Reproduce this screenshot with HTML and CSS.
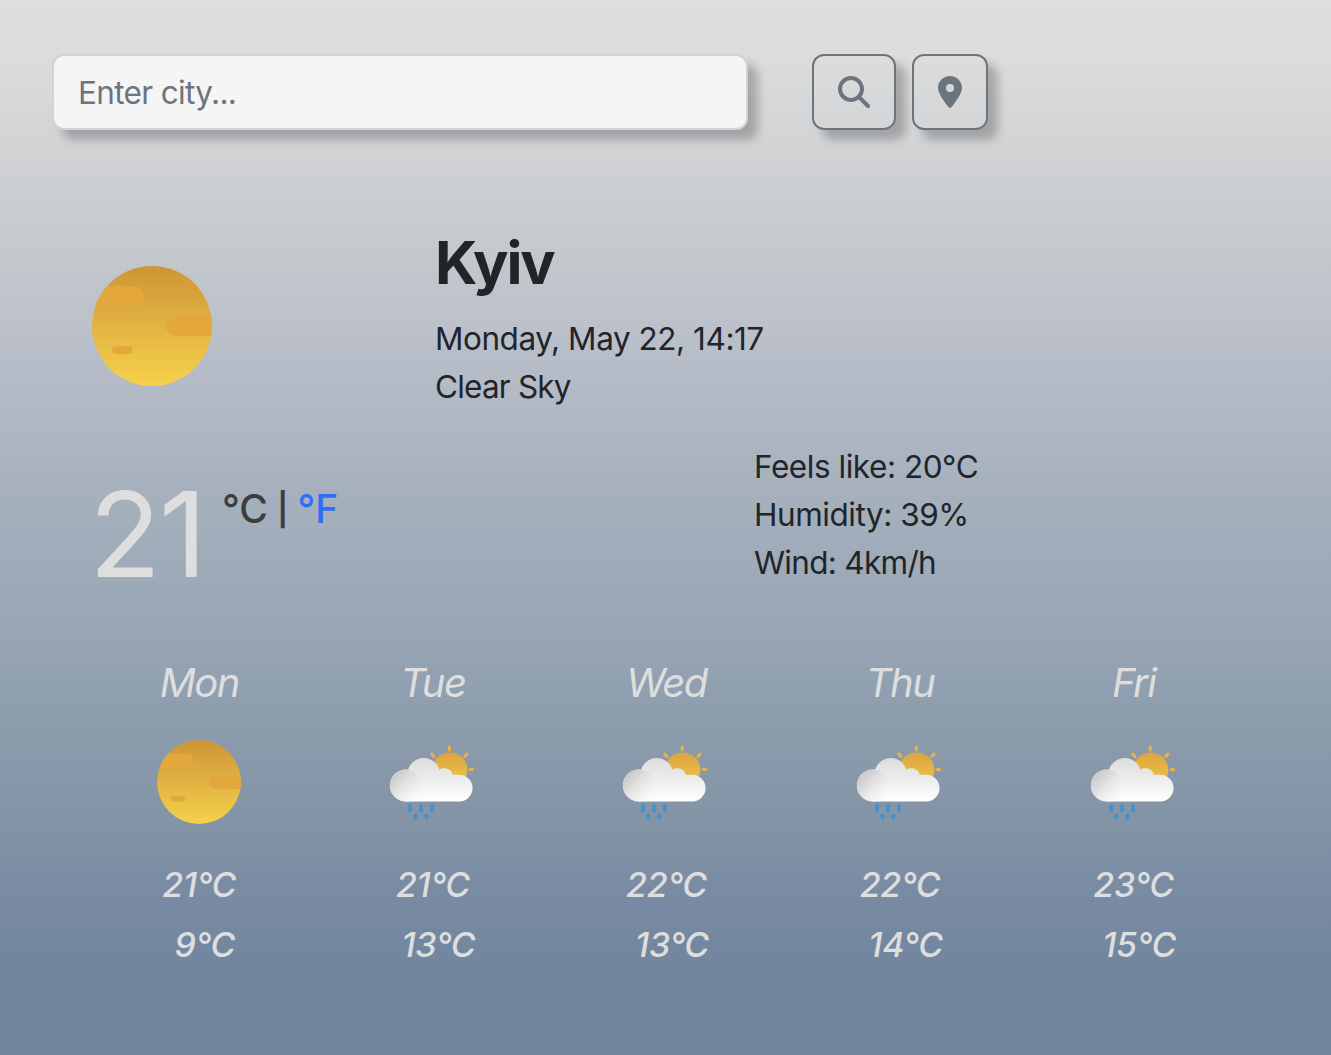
FILE: index.html
```
<!DOCTYPE html>
<html lang="en">
<head>
<meta charset="utf-8">
<title>Weather</title>
<link rel="stylesheet" href="styles.css">
</head>
<body>
<svg class="defs" aria-hidden="true">
  <defs>
    <linearGradient id="sunFill" x1="0" y1="0" x2="0" y2="1"><stop offset="0" stop-color="#cd9536"/><stop offset="1" stop-color="#f6d14c"/></linearGradient>
    <linearGradient id="smallSun" x1="0" y1="0" x2="0" y2="1"><stop offset="0" stop-color="#dba440"/><stop offset="1" stop-color="#f2c94a"/></linearGradient>
    <linearGradient id="cloudFill" gradientUnits="userSpaceOnUse" x1="0" y1="26" x2="0" y2="70"><stop offset="0" stop-color="#dcdcdc"/><stop offset="1" stop-color="#ffffff"/></linearGradient>
    <linearGradient id="puffFill" gradientUnits="userSpaceOnUse" x1="13" y1="44" x2="34" y2="64"><stop offset="0" stop-color="#cdcdcd"/><stop offset="1" stop-color="#f8f8f8" stop-opacity=".6"/></linearGradient>
    <clipPath id="disc"><circle cx="60" cy="60" r="60"/></clipPath>
    <symbol id="sun" viewBox="0 0 120 120">
      <circle cx="60" cy="60" r="60" fill="url(#sunFill)"/>
      <g clip-path="url(#disc)" fill="#e3a73c">
        <rect x="-10" y="20" width="62" height="20" rx="10"/>
        <rect x="74" y="50" width="60" height="20" rx="10"/>
        <rect x="20" y="80" width="20" height="8" rx="4"/>
      </g>
    </symbol>
    <symbol id="rain" viewBox="0 0 100 100">
      <g stroke="#eeb045" stroke-width="3" stroke-linecap="round">
        <path d="M66.3 15v3M48.9 22l2 2.6M84 22l-2.2 2.6M87.2 37.4h2.4"/>
      </g>
      <circle cx="66.7" cy="38" r="17.6" fill="url(#smallSun)"/>
      <g fill="url(#cloudFill)">
        <circle cx="22.9" cy="53.4" r="16"/>
        <circle cx="40.7" cy="42.2" r="16.2"/>
        <circle cx="61.2" cy="44.8" r="8.8"/>
        <path d="M22.9 69.4V45H40V42.8H76.3A13.3 13.3 0 0 1 76.3 69.4Z"/>
      </g>
      <circle cx="22.9" cy="53.4" r="15.9" fill="url(#puffFill)"/>
      <g fill="#4890cc">
        <rect x="25" y="72" width="4" height="8.6" rx="2"/><rect x="36" y="72" width="4" height="8.6" rx="2"/><rect x="47" y="72" width="4" height="8.6" rx="2"/>
        <rect x="30.3" y="81.6" width="4.2" height="6" rx="2.1"/><rect x="41.3" y="81.6" width="4.2" height="6" rx="2.1"/>
      </g>
    </symbol>
  </defs>
</svg>
<main class="app">
  <form class="search">
    <input class="city-input" type="text" placeholder="Enter city...">
    <button class="btn btn-search" type="button" aria-label="Search"><svg width="32" height="32" viewBox="0 0 512 512"><path d="M416 208c0 45.9-14.9 88.3-40 122.7L502.6 457.4c12.5 12.5 12.5 32.8 0 45.3s-32.8 12.5-45.3 0L330.7 376c-34.4 25.2-76.8 40-122.7 40C93.1 416 0 322.9 0 208S93.1 0 208 0S416 93.1 416 208zM208 352a144 144 0 1 0 0-288 144 144 0 1 0 0 288z"/></svg></button>
    <button class="btn btn-place" type="button" aria-label="Current location"><svg width="24" height="32" viewBox="0 0 384 512"><path d="M215.7 499.2C267 435 384 279.4 384 192C384 86 298 0 192 0S0 86 0 192c0 87.4 117 243 168.3 307.2c12.3 15.3 35.1 15.3 47.4 0zM192 128a64 64 0 1 1 0 128 64 64 0 1 1 0-128z"/></svg></button>
  </form>
  <section class="overview">
    <svg class="main-icon"><use href="#sun"/></svg>
    <div class="place">
      <h1 class="city">Kyiv</h1>
      <div class="line date">Monday, May 22, 14:17</div>
      <div class="line sky">Clear Sky</div>
    </div>
  </section>
  <section class="current">
    <div class="temperature"><span class="value">21</span><span class="units"><span class="unit">°C</span><span class="bar">|</span><a class="unit link">°F</a></span></div>
    <div class="details">
      <div class="line feels">Feels like: 20°C</div>
      <div class="line humidity">Humidity: 39%</div>
      <div class="line wind">Wind: 4km/h</div>
    </div>
  </section>
  <section class="forecast">
    <div class="day"><div class="name">Mon</div><svg class="icon icon-sun"><use href="#sun"/></svg><div class="temp">21°C</div><div class="temp low">9°C</div></div>
    <div class="day"><div class="name">Tue</div><svg class="icon"><use href="#rain"/></svg><div class="temp">21°C</div><div class="temp low">13°C</div></div>
    <div class="day"><div class="name">Wed</div><svg class="icon"><use href="#rain"/></svg><div class="temp">22°C</div><div class="temp low">13°C</div></div>
    <div class="day"><div class="name">Thu</div><svg class="icon"><use href="#rain"/></svg><div class="temp">22°C</div><div class="temp low">14°C</div></div>
    <div class="day"><div class="name">Fri</div><svg class="icon"><use href="#rain"/></svg><div class="temp">23°C</div><div class="temp low">15°C</div></div>
  </section>
</main>
</body>
</html>
```
FILE: styles.css
```
* { box-sizing: border-box; }
body {
  margin: 0;
  font-family: Inter, "Liberation Sans", sans-serif;
  font-size: 31.5px;
  line-height: 48px;
  color: #212529;
}
.defs { display: block; width: 0; height: 0; }
.app {
  height: 1055px;
  padding-top: 54px;
  overflow: hidden;
  background: linear-gradient(180deg, #dedede 0, #dcdcdc 55px, #c5c9cd 250px, #bbc0ca 330px, #a8b2be 475px, #9ba8b7 600px, #8b9bac 740px, #8394a6 820px, #7a8ca4 885px, #71859e 975px, #72869f 1055px);
}
.search { display: flex; height: 76px; padding-left: 52px; }
.city-input {
  width: 696px;
  height: 76px;
  margin-right: 64px;
  padding: 0 24px;
  border: 2px solid #ced4da;
  border-radius: 12px;
  background: #f5f5f5;
  box-shadow: 10px 10px 10px rgba(0, 0, 0, .23);
  font: inherit;
  letter-spacing: -.65px;
}
.city-input::placeholder { color: #6c757d; opacity: 1; }
.btn {
  display: flex;
  align-items: center;
  justify-content: center;
  height: 76px;
  padding: 0;
  border: 2px solid #6c757d;
  border-radius: 12px;
  background: transparent;
  box-shadow: 10px 10px 10px rgba(0, 0, 0, .23);
}
.btn svg { display: block; fill: #6c757d; }
.btn-search { width: 84px; margin-right: 16px; }
.btn-place { width: 76px; }
.overview { display: flex; height: 184px; margin-top: 97px; padding-left: 92px; }
.main-icon { flex: none; width: 120px; height: 120px; margin-top: 39px; }
.place { margin-left: 223px; }
.city { margin: 0 0 16px; font-size: 59px; line-height: 72px; font-weight: 700; letter-spacing: -2.1px; }
.line { height: 48px; white-space: nowrap; letter-spacing: -.45px; }
.sky { letter-spacing: -.8px; }
.wind { letter-spacing: -.7px; }
.current { display: flex; height: 144px; margin-top: 32px; padding-left: 89px; }
.temperature { display: flex; width: 665px; color: #dedede; }
.value { font-size: 118px; line-height: 182px; letter-spacing: -2px; }
.units { display: flex; margin-left: 17px; padding-top: 42px; font-size: 39px; line-height: 48px; font-weight: 450; color: #3d3d3d; }
.bar { margin: 0 9px; font-size: 32px; font-weight: 600; line-height: 50px; }
.link { color: #2f6df6; }
.forecast {
  display: grid;
  grid-template-columns: repeat(5, 233.6px);
  margin: 72px 0 0 82.5px;
  color: #dedede;
  font-style: italic;
}
.day { display: flex; flex-direction: column; align-items: center; }
.name { font-size: 40px; line-height: 48px; font-weight: 450; letter-spacing: -1.5px; }
.icon { width: 100px; height: 100px; margin: 25px 0 23px; }
.icon-sun { width: 84px; height: 84px; margin: 33px 0 31px; }
.temp { font-size: 34px; line-height: 60px; font-weight: 500; letter-spacing: -.3px; }
.low { padding-left: 11px; }
```
